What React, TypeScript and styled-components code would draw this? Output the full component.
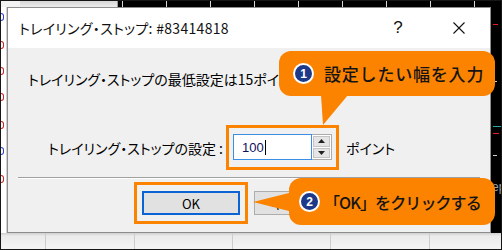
import React from 'react';
import styled, { createGlobalStyle } from 'styled-components';

const ORANGE = '#fb8300';
const NAVY = '#1d3a8a';
const JP = '"Noto Sans CJK JP", "Noto Sans", sans-serif';

const GlobalStyle = createGlobalStyle`
  html, body { margin: 0; padding: 0; background: #fff; }
  body { font-family: ${JP}; }
`;

const Screen = styled.div`
  position: relative;
  width: 502px;
  height: 250px;
  box-sizing: border-box;
  border: 1px solid #161616;
  display: flex;
  flex-direction: column;
  overflow: hidden;
  background: #fff;
`;

/* chart behind the dialog */
const TopStrip = styled.div`
  height: 6px;
  flex-shrink: 0;
  display: flex;
`;

const HeaderGray = styled.div`
  width: 117px;
  box-sizing: border-box;
  background: linear-gradient(#d6d6d6, #ececec);
  border-left: 19px solid #f2f2f2;
  border-right: 1px solid #9a9a9a;
`;

const HeaderBlack = styled.div`
  flex: 1;
  background: #000;
  display: flex;
  gap: 43px;
  padding-left: 4px;
`;

const Tick = styled.span`
  width: 1px;
  height: 6px;
  background: #d8d8d8;
`;

const MiddleRow = styled.div`
  height: 226px;
  flex-shrink: 0;
  display: flex;
`;

const LeftGutter = styled.div`
  width: 5px;
  overflow: hidden;
  background: #fff;
  border-right: 1px solid #d0d0d0;
  display: flex;
  flex-direction: column;
`;

/* right edge of a cut-off axis number */
const AxisStub = styled.span<{ $color: string; $gap: number }>`
  margin-top: ${p => p.$gap}px;
  width: 3px;
  height: 8px;
  box-sizing: border-box;
  border: 1px solid ${p => p.$color};
  border-left: none;
  border-radius: 0 3px 3px 0;
`;

const RightGutter = styled.div`
  flex: 1;
  background: #000;
  display: flex;
  flex-direction: column;
  overflow: hidden;
`;

const Mark = styled.span<{ $color: string; $gap: number; $w: number }>`
  margin-top: ${p => p.$gap}px;
  margin-left: 2px;
  width: ${p => p.$w}px;
  height: 1px;
  background: ${p => p.$color};
`;

const SideText = styled.span`
  margin-top: 24px;
  margin-left: 1px;
  font: 12px/14px 'Liberation Sans', sans-serif;
  color: #9aa4b0;
  white-space: nowrap;
`;

const BottomStrip = styled.div`
  flex: 1;
  display: flex;
  background: linear-gradient(#cfcfcf 0, #ebebeb 3px, #f4f4f4);
`;

const BottomCell = styled.div<{ $w: number }>`
  width: ${p => p.$w}px;
  flex-shrink: 0;
  border-right: 1px solid #cdcdcd;
`;

/* dialog */
const Dialog = styled.div`
  width: 484px;
  box-sizing: border-box;
  border: 1px solid #8d8d8d;
  display: flex;
  flex-direction: column;
  background: #f0f0f0;
`;

const TitleBar = styled.div`
  height: 40px;
  flex-shrink: 0;
  background: #fff;
  display: flex;
  align-items: center;
  padding-left: 11px;
`;

const Title = styled.span`
  font-size: 14px;
  color: #111;
  font-feature-settings: 'palt';
  letter-spacing: 0.3px;
`;

const TitleControls = styled.div`
  margin-left: auto;
  display: flex;
  height: 100%;
  gap: 21px;
  padding-right: 11px;
`;

const ControlButton = styled.div`
  width: 40px;
  display: flex;
  align-items: center;
  justify-content: center;
  font: 17px 'Liberation Sans', sans-serif;
  color: #111;
`;

const Body = styled.div`
  flex: 1;
  display: flex;
  flex-direction: column;
`;

const Message = styled.div`
  margin: 22px 0 0 20px;
  font-size: 14px;
  line-height: 19px;
  color: #000;
  white-space: nowrap;
  font-feature-settings: 'palt';
`;

const SettingRow = styled.div`
  margin-top: 36px;
  padding-left: 38px;
  display: flex;
  align-items: center;
`;

const FieldLabel = styled.span`
  width: 177px;
  text-align: right;
  font-size: 14px;
  color: #000;
  white-space: nowrap;
  font-feature-settings: 'palt';
`;

const Highlight = styled.div<{ $pad: string; $gap?: number }>`
  margin-left: ${p => p.$gap ?? 0}px;
  border: 3px solid ${ORANGE};
  padding: ${p => p.$pad};
  display: flex;
`;

const NumberField = styled.div`
  width: 79px;
  height: 26px;
  box-sizing: border-box;
  border: 1px solid #3b8ee8;
  background: #fff;
  display: flex;
  align-items: center;
  padding-left: 8px;
  font: 13px 'Liberation Sans', sans-serif;
  color: #10105a;
`;

const Caret = styled.span`
  width: 1px;
  height: 15px;
  background: #000;
  margin-left: 1px;
`;

const Spinner = styled.div`
  width: 20px;
  height: 26px;
  box-sizing: border-box;
  border: 1px solid #acacac;
  border-left: none;
  background: #fff;
  display: flex;
  flex-direction: column;
  padding: 1px;
  gap: 1px;
`;

const SpinHalf = styled.div`
  flex: 1;
  background: #e5e5e5;
  border: 1px solid #c4c4c4;
  display: flex;
  align-items: center;
  justify-content: center;
`;

const Unit = styled.span`
  margin-left: 7px;
  font-size: 14px;
  color: #000;
  font-feature-settings: 'palt';
`;

const Separator = styled.div`
  margin: 7px 10px 0;
  height: 1px;
  background: #a0a0a0;
  border-bottom: 1px solid #fff;
`;

const ButtonRow = styled.div`
  margin-top: 3px;
  padding-left: 126px;
  display: flex;
  align-items: center;
`;

const DialogButton = styled.div<{ $primary?: boolean }>`
  width: 98px;
  height: 24px;
  box-sizing: border-box;
  border: ${p => (p.$primary ? '2px solid #0a64d4' : '1px solid #adadad')};
  background: #e1e1e1;
  display: flex;
  align-items: center;
  justify-content: center;
  font-size: 13px;
  color: #000;
  margin-left: ${p => (p.$primary ? 0 : 6)}px;
`;

/* annotation callouts */
const Callout = styled.div<{ $left: number; $top: number; $w: number; $h: number; $pl: number; $gap: number }>`
  position: absolute;
  left: ${p => p.$left}px;
  top: ${p => p.$top}px;
  width: ${p => p.$w}px;
  height: ${p => p.$h}px;
  background: ${ORANGE};
  border-radius: 12px;
  display: flex;
  align-items: center;
  padding-left: ${p => p.$pl}px;
  gap: ${p => p.$gap}px;
  box-sizing: border-box;
`;

const Tail = styled.div<{ $left: number; $top: number; $w: number; $h: number; $clip: string }>`
  position: absolute;
  left: ${p => p.$left}px;
  top: ${p => p.$top}px;
  width: ${p => p.$w}px;
  height: ${p => p.$h}px;
  background: ${ORANGE};
  clip-path: polygon(${p => p.$clip});
`;

const Badge = styled.span`
  width: 21px;
  height: 21px;
  box-sizing: border-box;
  border-radius: 50%;
  border: 2px solid #fff;
  background: ${NAVY};
  color: #fff;
  display: flex;
  align-items: center;
  justify-content: center;
  font: bold 12px 'Liberation Sans', sans-serif;
  flex-shrink: 0;
`;

const CalloutText = styled.span<{ $size: number; $spacing: number }>`
  font-size: ${p => p.$size}px;
  font-weight: 500;
  color: #141414;
  letter-spacing: ${p => p.$spacing}px;
  white-space: nowrap;
`;

const Triangle: React.FC<{ up?: boolean }> = ({ up }) => (
  <svg width="7" height="4" viewBox="0 0 7 4">
    <polygon points={up ? '0,4 7,4 3.5,0' : '0,0 7,0 3.5,4'} fill="#222" />
  </svg>
);

const axisStubs = [
  { c: '#2a3fd0', g: 6 },
  { c: '#d02020', g: 20 },
  { c: '#d02020', g: 18 },
  { c: '#d02020', g: 18 },
  { c: '#d02020', g: 20 },
  { c: '#2a3fd0', g: 18 },
  { c: '#d02020', g: 20 },
];

const sideMarks = [
  { c: '#e02020', g: 17, w: 5 },
  { c: '#cfcfcf', g: 56, w: 4 },
  { c: '#2aa8a8', g: 44, w: 10 },
  { c: '#e02020', g: 6, w: 6 },
  { c: '#cfcfcf', g: 21, w: 4 },
];

const App: React.FC = () => {
  return (
    <>
      <GlobalStyle />
      <Screen>
        <TopStrip>
          <HeaderGray />
          <HeaderBlack>
            {Array.from({ length: 9 }).map((_, i) => (
              <Tick key={i} />
            ))}
          </HeaderBlack>
        </TopStrip>

        <MiddleRow>
          <LeftGutter>
            {axisStubs.map((a, i) => (
              <AxisStub key={i} $color={a.c} $gap={a.g} />
            ))}
          </LeftGutter>

          <Dialog>
            <TitleBar>
              <Title>トレイリング・ストップ: #83414818</Title>
              <TitleControls>
                <ControlButton>?</ControlButton>
                <ControlButton>
                  <svg width="12" height="12" viewBox="0 0 12 12">
                    <path d="M0.5 0.5 L11.5 11.5 M11.5 0.5 L0.5 11.5" stroke="#111" strokeWidth="1.1" />
                  </svg>
                </ControlButton>
              </TitleControls>
            </TitleBar>

            <Body>
              <Message>トレイリング・ストップの最低設定は15ポイントです。</Message>

              <SettingRow>
                <FieldLabel>トレイリング・ストップの設定 :</FieldLabel>
                <Highlight $pad="6px 4px 7px" $gap={3}>
                  <NumberField>
                    100
                    <Caret />
                  </NumberField>
                  <Spinner>
                    <SpinHalf>
                      <Triangle up />
                    </SpinHalf>
                    <SpinHalf>
                      <Triangle />
                    </SpinHalf>
                  </Spinner>
                </Highlight>
                <Unit>ポイント</Unit>
              </SettingRow>

              <Separator />

              <ButtonRow>
                <Highlight $pad="6px 5px">
                  <DialogButton $primary>OK</DialogButton>
                </Highlight>
                <DialogButton>キャンセル</DialogButton>
              </ButtonRow>
            </Body>
          </Dialog>

          <RightGutter>
            {sideMarks.map((m, i) => (
              <Mark key={i} $color={m.c} $gap={m.g} $w={m.w} />
            ))}
            <SideText>ep</SideText>
          </RightGutter>
        </MiddleRow>

        <BottomStrip>
          {[44, 88, 97, 97, 98].map((w, i) => (
            <BottomCell key={i} $w={w} />
          ))}
        </BottomStrip>

        <Callout $left={278} $top={50} $w={216} $h={45} $pl={14} $gap={10}>
          <Tail $left={40} $top={44} $w={30} $h={31} $clip="2px 0, 29px 0, 4px 30px" />
          <Badge>1</Badge>
          <CalloutText $size={17} $spacing={0.8}>設定したい幅を入力</CalloutText>
        </Callout>

        <Callout $left={288} $top={177} $w={206} $h={47} $pl={10} $gap={4}>
          <Tail $left={-36} $top={14} $w={40} $h={21} $clip="0 10px, 40px 0, 40px 20px" />
          <Badge>2</Badge>
          <CalloutText $size={16} $spacing={-0.9}>「OK」をクリックする</CalloutText>
        </Callout>
      </Screen>
    </>
  );
};

export default App;
